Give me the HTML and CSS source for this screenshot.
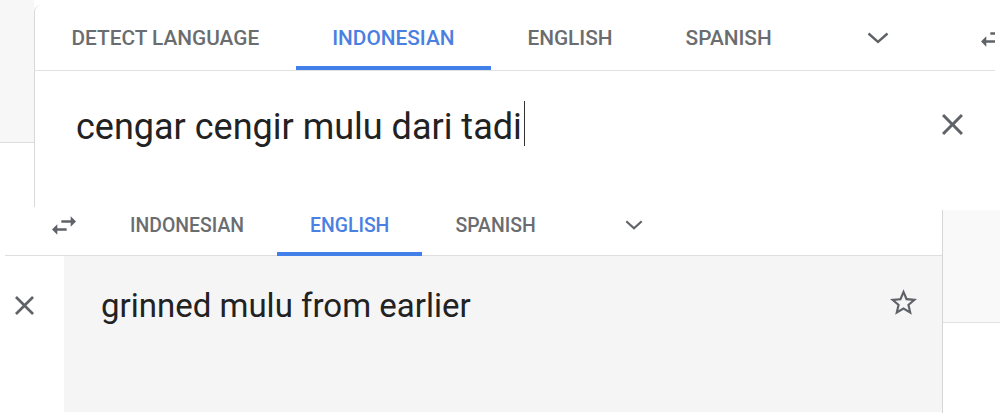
FILE: index.html
```html
<!DOCTYPE html>
<html>
<head>
<meta charset="utf-8">
<link rel="stylesheet" href="styles.css">
</head>
<body>
<div class="page">
  <section class="top">
    <div class="side-strip"></div>
    <div class="src-card">
      <nav class="src-tabs">
        <div class="tab">DETECT LANGUAGE</div>
        <div class="tab active">INDONESIAN</div>
        <div class="tab">ENGLISH</div>
        <div class="tab">SPANISH</div>
        <div class="chev-btn">
          <svg class="chev" viewBox="0 0 22 12"><polyline points="1.5,1.5 11,10 20.5,1.5"/></svg>
        </div>
        <div class="swap-btn">
          <svg class="swap" viewBox="3 5 18 14"><path d="M6.99 11L3 15l3.99 4v-3H14v-2H6.99v-3zM21 9l-3.990-4v3H10v2h7.01v3L21 9z"/></svg>
        </div>
      </nav>
      <div class="src-body">
        <div class="src-text">cengar cengir mulu dari tadi<span class="caret"></span></div>
        <svg class="close-top" viewBox="5 5 14 14"><path d="M19 6.41L17.59 5 12 10.59 6.41 5 5 6.41 10.59 12 5 17.59 6.41 19 12 13.41 17.59 19 19 17.59 13.41 12z"/></svg>
      </div>
    </div>
  </section>
  <section class="bottom">
    <div class="tgt-card">
      <nav class="tgt-tabs">
        <div class="swap-btn2">
          <svg class="swap2" viewBox="3 5 18 14"><path d="M6.99 11L3 15l3.99 4v-3H14v-2H6.99v-3zM21 9l-3.99-4v3H10v2h7.01v3L21 9z"/></svg>
        </div>
        <div class="tab2">INDONESIAN</div>
        <div class="tab2 active">ENGLISH</div>
        <div class="tab2">SPANISH</div>
        <div class="chev-btn2">
          <svg class="chev2" viewBox="0 0 18 10"><polyline points="1.3,1.3 9,8.2 16.7,1.3"/></svg>
        </div>
      </nav>
      <div class="tgt-body">
        <div class="close-col">
          <svg class="close-bot" viewBox="5 5 14 14"><path d="M19 6.41L17.59 5 12 10.59 6.41 5 5 6.41 10.59 12 5 17.59 6.41 19 12 13.41 17.59 19 19 17.59 13.41 12z"/></svg>
        </div>
        <div class="tgt-area">
          <div class="tgt-text">grinned mulu from earlier</div>
          <svg class="star" viewBox="2 2 20 19"><path d="M22 9.24l-7.19-.62L12 2 9.19 8.63 2 9.24l5.46 4.73L5.82 21 12 17.27 18.18 21l-1.630-7.03L22 9.24zM12 15.4l-3.76 2.27 1-4.28-3.32-2.88 4.38-.38L12 6.1l1.71 4.04 4.38.38-3.32 2.88 1 4.28L12 15.4z"/></svg>
        </div>
      </div>
    </div>
    <div class="right-strip">
      <div class="right-box"></div>
    </div>
  </section>
</div>
</body>
</html>
```

FILE: styles.css
```css
* { box-sizing: border-box; }
html, body { margin: 0; padding: 0; background: #fff; }
body {
  width: 1000px;
  height: 416px;
  overflow: hidden;
  font-family: Roboto, "Liberation Sans", sans-serif;
}
.page { width: 1000px; height: 416px; display: flex; flex-direction: column; }

/* ---------- top panel ---------- */
.top { display: flex; height: 207px; flex: none; }
.side-strip {
  width: 34px;
  height: 143px;
  background: #f7f7f7;
  border-bottom: 1px solid #dcdcdc;
  flex: none;
}
.src-card {
  flex: 1;
  margin-top: 5px;
  border-left: 1px solid #d9d9d9;
  border-top-left-radius: 7px;
  display: flex;
  flex-direction: column;
  min-width: 0;
}
.src-tabs {
  display: flex;
  height: 66px;
  border-bottom: 1px solid #e2e2e2;
  margin-right: 5px;
  flex: none;
  overflow: hidden;
}
.tab {
  position: relative;
  display: flex;
  align-items: center;
  padding: 0 36.5px;
  font-size: 20.8px;
  font-weight: 500;
  color: #6a6d70;
  white-space: nowrap;
  flex: none;
}
.tab.active { color: #4a80e2; }
.tab.active::after {
  content: "";
  position: absolute;
  left: 0; right: 0; bottom: 0;
  height: 4px;
  background: #4180e8;
}
.chev-btn {
  width: 140px;
  flex: none;
  display: flex;
  align-items: center;
  justify-content: center;
}
.chev { width: 22px; height: 12px; fill: none; stroke: #5f6368; stroke-width: 2.4; }
.swap-btn {
  flex: none;
  display: flex;
  align-items: center;
  padding-left: 33px;
}
.swap { width: 24px; height: 19px; fill: #5f6368; }
.src-body {
  flex: 1;
  display: flex;
  align-items: flex-start;
  justify-content: space-between;
  padding: 34px 37px 0 41px;
}
.src-text {
  font-size: 36px;
  line-height: 44px;
  color: #222;
  white-space: nowrap;
}
.caret {
  display: inline-block;
  width: 1.5px;
  height: 45px;
  background: #333;
  vertical-align: top;
  margin-left: 2px;
  margin-top: -4px;
}
.close-top { width: 21px; height: 21px; fill: #5f6368; margin-top: 9px; }

/* ---------- bottom panel ---------- */
.bottom { display: flex; flex: 1; }
.tgt-card {
  width: 942px;
  flex: none;
  display: flex;
  flex-direction: column;
}
.tgt-tabs {
  display: flex;
  height: 49px;
  margin-left: 5px;
  border-bottom: 1px solid #dedede;
  flex: none;
}
.swap-btn2 {
  width: 92px;
  flex: none;
  display: flex;
  align-items: center;
  justify-content: flex-end;
  padding: 0 21px 12px 0;
}
.swap2 { width: 24px; height: 19px; fill: #5f6368; }
.tab2 {
  position: relative;
  display: flex;
  align-items: center;
  padding: 0 33px 12px;
  font-size: 19.4px;
  font-weight: 500;
  color: #6a6d70;
  white-space: nowrap;
  flex: none;
}
.tab2.active { color: #4a80e2; }
.tab2.active::after {
  content: "";
  position: absolute;
  left: 0; right: 0; bottom: -1px;
  height: 4px;
  background: #4180e8;
}
.chev-btn2 {
  width: 130px;
  flex: none;
  display: flex;
  align-items: center;
  justify-content: center;
  padding-bottom: 12px;
}
.chev2 { width: 18px; height: 10px; fill: none; stroke: #5f6368; stroke-width: 2.2; }
.tgt-body {
  display: flex;
  height: 156px;
  flex: none;
}
.close-col {
  width: 64px;
  flex: none;
  display: flex;
  justify-content: center;
  padding: 40px 16px 0 0;
}
.close-bot { width: 19px; height: 19px; fill: #5f6368; }
.tgt-area {
  flex: 1;
  background: #f5f5f5;
  display: flex;
  justify-content: space-between;
  align-items: flex-start;
  padding: 30px 25px 0 37px;
}
.tgt-text {
  font-size: 33px;
  line-height: 40px;
  color: #222;
  white-space: nowrap;
}
.star { width: 27px; height: 26px; fill: #5f6368; margin-top: 3px; }
.right-strip {
  flex: 1;
  margin-top: 3px;
  border-left: 1px solid #d6d6d6;
  height: 203px;
}
.right-box {
  height: 113px;
  background: #f9f9f9;
  border-bottom: 1px solid #e0e0e0;
}
```
